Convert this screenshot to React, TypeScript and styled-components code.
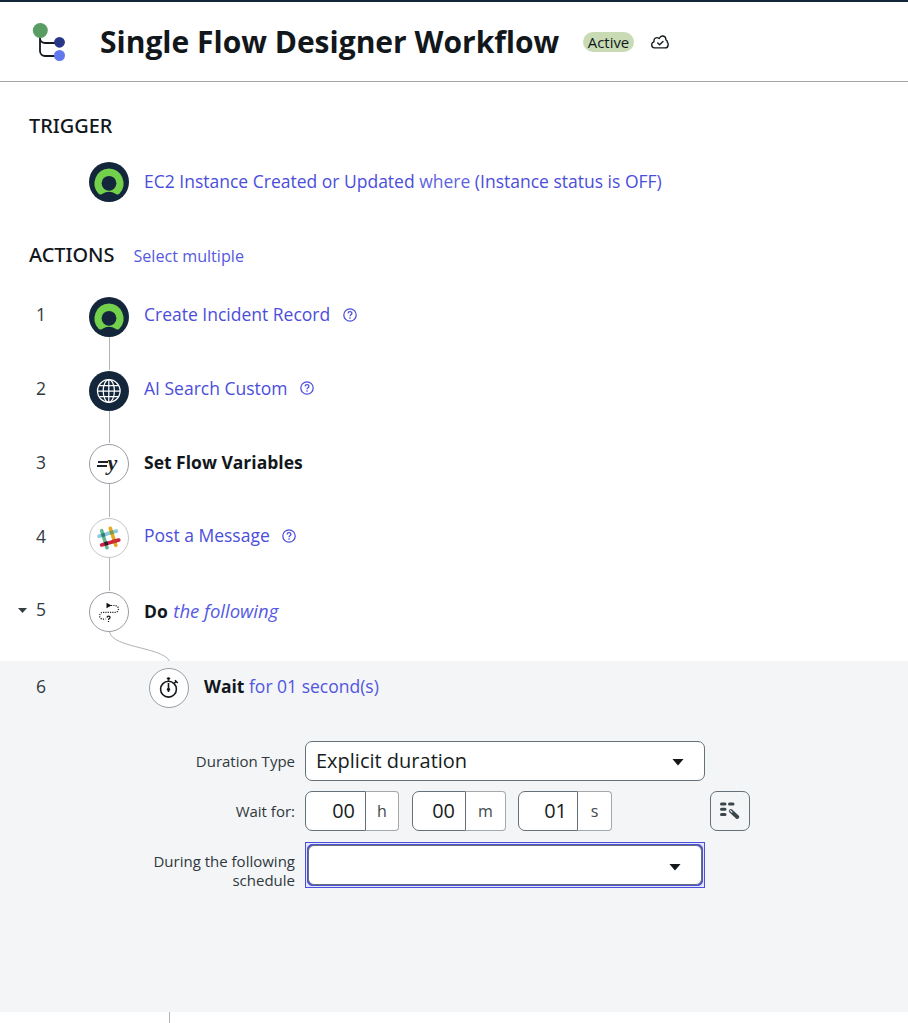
import React from "react";
import styled, { createGlobalStyle, css } from "styled-components";

const Global = createGlobalStyle`
  * { box-sizing: border-box; }
  body { margin: 0; background: #fff; }
`;

const Page = styled.div`
  height: 1023px;
  overflow: hidden;
  display: flex;
  flex-direction: column;
  font-family: "Open Sans", "Noto Sans", sans-serif;
  color: #12171c;
  background: #fff;
`;

const Header = styled.header`
  flex: none;
  height: 82px;
  border-top: 2px solid #14263a;
  border-bottom: 1px solid #a1a5a8;
  display: flex;
  align-items: center;
  padding: 2px 0 0 32px;
  svg { flex: none; display: block; }
`;

const Title = styled.h1`
  margin: 0 24px 2px 33px;
  width: 459px;
  font-size: 30px;
  line-height: 40px;
  font-weight: 700;
  white-space: nowrap;
`;

const Status = styled.span`
  width: 51px;
  height: 20px;
  margin: 0 17px 2px 0;
  border-radius: 10px;
  background: #c8dbb4;
  font-size: 14.9px;
  line-height: 21px;
  text-align: center;
  white-space: nowrap;
`;

const SectionHead = styled.div<{ $h: number; $pad: number }>`
  flex: none;
  height: ${(p) => p.$h}px;
  padding: ${(p) => p.$pad}px 0 0 29px;
  display: flex;
  align-items: baseline;
  gap: 19px;
`;

const SectionTitle = styled.h2`
  margin: 0;
  font-family: "Noto Sans", sans-serif;
  font-size: 19.9px;
  line-height: 26px;
  font-weight: 500;
  white-space: nowrap;
`;

const SelectLink = styled.a`
  font-size: 16.150px;
  line-height: 24px;
  color: #5459e0;
  white-space: nowrap;
`;

const Step = styled.div<{ $h: number; $indent?: boolean }>`
  flex: none;
  height: ${(p) => p.$h}px;
  padding-left: 18px;
  display: grid;
  grid-template-columns: 18px ${(p) => (p.$indent ? 113 : 53)}px 40px 1fr;
  align-items: start;
`;

const Caret = styled.span`
  grid-column: 1;
  margin-top: 16px;
  width: 9px;
  height: 5px;
  background: #343d42;
  clip-path: polygon(0 0, 100% 0, 50% 100%);
`;

const StepNumber = styled.span<{ $drop?: number }>`
  grid-column: 2;
  padding-top: ${(p) => p.$drop ?? 0}px;
  font-size: 17.5px;
  line-height: 34px;
  color: #30393e;
`;

const Track = styled.div`
  grid-column: 3;
  height: 100%;
  display: flex;
  flex-direction: column;
  align-items: center;
`;

const Badge = styled.div<{ $dark?: boolean; $pale?: boolean }>`
  flex: none;
  width: 40px;
  height: 40px;
  border-radius: 50%;
  display: grid;
  place-items: center;
  ${(p) =>
    p.$dark
      ? css`background: #14263c;`
      : css`background: #fff; border: 1px solid ${p.$pale ? "#c3c5c9" : "#989da3"};`}
  svg { display: block; }
`;

const Line = styled.span`
  flex: 1;
  width: 1px;
  margin: 0 0 1px 1px;
  background: #b0b3b6;
`;

const Label = styled.div<{ $h?: number }>`
  grid-column: 4;
  padding-left: 15px;
  display: flex;
  align-items: center;
  height: ${(p) => p.$h ?? 36}px;
  font-size: 17.5px;
  white-space: pre;
  color: #4b4edb;
  b { color: #12171c; font-weight: 700; }
  i { color: #5459e6; font-size: 18.5px; margin-left: 1px; }
`;

const Muted = styled.span`
  color: #5e63e0;
`;

const WaitText = styled.span`
  color: #5256df;
`;

const Help = styled.svg<{ $top?: number }>`
  margin: ${(p) => p.$top ?? 0}px 0 0 12.500px;
  display: block;
`;

const Panel = styled.section`
  flex: none;
  height: 351px;
  background: #f3f5f7;
  padding-top: 7px;
`;

const Form = styled.div`
  display: grid;
  grid-template-columns: 295px 400px 40px;
  grid-template-rows: 40px 40px 46px;
  row-gap: 10px;
`;

const FieldLabel = styled.label`
  padding-top: 11px;
  text-align: right;
  font-size: 15px;
  line-height: 19px;
  color: #30383d;
  white-space: nowrap;
`;

const Cell = styled.div`
  margin-left: 10px;
  width: 400px;
  display: flex;
`;

const Select = styled.div`
  width: 400px;
  height: 40px;
  border: 1px solid #667078;
  border-radius: 7px;
  background: #fff;
  padding: 0 20px 2px 10px;
  display: flex;
  align-items: center;
  justify-content: space-between;
  font-size: 20px;
  color: #171c20;
`;

const FocusFrame = styled.div`
  margin-top: 1px;
  width: 400px;
  height: 46px;
  border: 1px solid #4b50d6;
  background: #e4e6fb;
  padding: 1px;
`;

const FocusSelect = styled.div`
  height: 42px;
  border: 1px solid #4b50d6;
  border-radius: 5px;
  background: #4b50d6;
`;

const FocusInner = styled.div`
  height: 40px;
  border: 1px solid #667078;
  border-radius: 6px;
  background: #fff;
  display: flex;
  align-items: center;
  justify-content: flex-end;
  padding-right: 20px;
`;

const Arrow = styled.span`
  width: 12px;
  height: 7px;
  margin-top: 4px;
  background: #14181b;
  clip-path: polygon(0 0, 100% 0, 50% 100%);
`;

const Unit = styled.div<{ $gap: number }>`
  display: flex;
  width: 94px;
  height: 40px;
  margin-right: ${(p) => p.$gap}px;
`;

const Value = styled.div<{ $w: number }>`
  width: ${(p) => p.$w}px;
  border: 1px solid #667078;
  border-radius: 7px 0 0 7px;
  background: #fff;
  padding-right: 10px;
  text-align: right;
  font-size: 19.9px;
  line-height: 37px;
  color: #171c20;
`;

const Suffix = styled.div`
  flex: 1;
  border: 1px solid #a3a8ac;
  border-left: 0;
  border-radius: 0 4px 4px 0;
  background: #fff;
  text-align: center;
  font-size: 16px;
  line-height: 38px;
  color: #42484c;
`;

const ToolButton = styled.button`
  margin-left: 15px;
  width: 40px;
  height: 40px;
  padding: 0;
  border: 1px solid #667078;
  border-radius: 7px;
  background: #f3f5f7;
  display: grid;
  place-items: center;
`;

const Curve = styled.svg`
  flex: none;
  align-self: flex-start;
  display: block;
  margin-left: 20px;
`;

const Tail = styled.span`
  flex: 1;
  width: 1px;
  margin-left: 169px;
  background: #b0b3b6;
`;

const FlowIcon = () => (
  <svg width="35" height="40" viewBox="0 0 35 40" fill="none">
    <path d="M8 10V28a5 5 0 0 0 5 5H26M8 15a5 5 0 0 0 5 5H26" stroke="#14191d" strokeWidth="1.8" />
    <circle cx="8.300" cy="7.500" r="7.500" fill="#599d64" />
    <circle cx="27.500" cy="19.300" r="5.400" fill="#293788" />
    <circle cx="27.500" cy="32.500" r="5.500" fill="#6179ec" />
  </svg>
);

const CloudShape = styled.svg`
  margin-bottom: 2px;
`;

const CloudIcon = () => (
  <CloudShape width="18" height="14" viewBox="0 0 18 14" fill="none" stroke="#14191d" strokeWidth="1.350" strokeLinejoin="round" strokeLinecap="round">
    <path d="M3.500 12.900C1.900 12.900.7 11.500.7 9.800c0-1.500 1-2.700 2.300-3-.3-2.200.8-4.200 2.700-4.200.9 0 1.700.3 2.500.9C9 1.700 10.500.8 12 1c1.900.3 3 1.800 2.800 3.900 1.300.5 1.700 1.300 1.500 2.500.7.5 1 1.200.9 2.200-.1 2-1.300 3.300-3 3.300z" />
    <path d="m6.700 7.900 1.900 1.900L12 6.500" />
  </CloudShape>
);

const NowIcon = () => (
  <svg width="40" height="40" viewBox="0 0 40 40">
    <path d="M20 6.400a15 15 0 0 0-10.400 25.300c.9 1 2.300 1 3.500.2a13 13 0 0 1 13.800 0c1.200.8 2.600.8 3.500-.2A15 15 0 0 0 20 6.400z" fill="#72d04c" />
    <circle cx="20" cy="21.300" r="7.400" fill="#14263c" />
  </svg>
);

const GlobeIcon = () => (
  <svg width="40" height="40" viewBox="0 0 40 40" fill="none" stroke="#fff" strokeWidth="1.250">
    <circle cx="19.800" cy="20" r="11.300" />
    <ellipse cx="19.800" cy="20" rx="5.600" ry="11.300" />
    <path d="M19.800 8.700v22.600M8.500 20h22.600M10.300 14.500h19M10.300 25.500h19" />
  </svg>
);

const Formula = styled.span`
  display: flex;
  align-items: center;
  margin: 0 4px 1px 0;
  color: #1d2226;
  em {
    font-family: "Liberation Serif", serif;
    font-size: 22px;
    line-height: 20px;
    font-weight: 700;
    margin-top: -1px;
  }
`;

const FormulaIcon = () => (
  <Formula>
    <svg width="11" height="8" viewBox="0 0 11 8" stroke="#1d2226" strokeWidth="2">
      <path d="M1 2h10M0 6h10" />
    </svg>
    <em>y</em>
  </Formula>
);

const SlackIcon = () => (
  <svg width="38" height="38" viewBox="0 0 38 38" fill="none" strokeLinecap="round" strokeWidth="3.600">
    <path d="m9 17.300 17.500-5.200" stroke="#8acbe0" />
    <path d="m11.700 11.700 5.300 17" stroke="#62b891" />
    <path d="m20.300 9.300 5.500 17" stroke="#e5a922" />
    <path d="m11.600 26 17.200-5" stroke="#cf2142" />
    <g strokeLinecap="butt">
      <path d="m11.500 16.500 3.400-1" stroke="#2f7f79" />
      <path d="m20 14 3.400-1" stroke="#7d9a45" />
      <path d="m14.500 25 3.400-1" stroke="#281c2b" />
      <path d="m23 22.600 3.400-1" stroke="#c73a24" />
    </g>
  </svg>
);

const DoIcon = () => (
  <svg width="38" height="38" viewBox="0 0 38 38" fill="none">
    <path d="M21 12.500h4a3.400 3.400 0 0 1 0 6.900H13a3.400 3.400 0 0 0 0 6.800h2.500" stroke="#222" strokeWidth="1.200" strokeDasharray="1.200 1.100" />
    <path d="m16.500 9.800 5 2.700-5 2.700z" fill="#111" />
    <path d="M17 24.600c.2-2.100 3.200-1.900 3 0-.1 1-1.400 1-1.500 2.300m0 1v1.200" stroke="#111" strokeWidth="1.200" />
  </svg>
);

const TimerIcon = () => (
  <svg width="38" height="38" viewBox="0 0 38 38" fill="none" stroke="#15191c" strokeWidth="1.600">
    <circle cx="18.500" cy="20.200" r="7.900" />
    <path d="M18.500 8.300v3.500M16.800 9.500h3.400M18.500 14v9M25 11.300l2.700 2.700M24.300 14.300l1.500-1.500" />
    <circle cx="18.500" cy="20.300" r="1.600" fill="#15191c" stroke="none" />
  </svg>
);

const HelpIcon = ({ top }: { top?: number }) => (
  <Help $top={top} width="14" height="14" viewBox="0 0 14 14" fill="none" stroke="#4b4edb" strokeWidth="1.250">
    <circle cx="7" cy="7" r="6.200" />
    <path d="M5.100 5.400c.1-2.500 3.900-2.300 3.800 0-.1 1.300-1.900 1.300-1.900 2.800M7 9.300v1.400" />
  </Help>
);

const WandIcon = () => (
  <svg width="22" height="20" viewBox="0 0 22 20" fill="none" stroke="#39464c" strokeWidth="3" strokeLinecap="round">
    <path d="M2.500 3h3.500M10.500 3h3.500M2.500 8.300h3.500M2.500 13.600h3.500" />
    <path d="m11.800 10 6.500 6" strokeWidth="3.800" />
    <path d="m11.400 9.600 1.500 1.500" stroke="#f3f5f7" strokeWidth="1.200" />
  </svg>
);

interface FlowStep {
  n: number;
  h: number;
  drop?: number;
  labelHeight?: number;
  icon: React.ReactNode;
  label: React.ReactNode;
  dark?: boolean;
  pale?: boolean;
}

const steps: FlowStep[] = [
  { n: 1, h: 74, labelHeight: 34, dark: true, icon: <NowIcon />, label: <>Create Incident Record<HelpIcon top={2} /></> },
  { n: 2, h: 73, labelHeight: 34, dark: true, icon: <GlobeIcon />, label: <>AI Search Custom<HelpIcon /></> },
  { n: 3, h: 74, drop: 1, icon: <FormulaIcon />, label: <b>Set Flow Variables</b> },
  { n: 4, h: 74, drop: 1, labelHeight: 34, pale: true, icon: <SlackIcon />, label: <>Post a Message<HelpIcon top={2} /></> },
];

const durations = [
  { value: "00", unit: "h", gap: 13, input: 61 },
  { value: "00", unit: "m", gap: 12, input: 54 },
  { value: "01", unit: "s", gap: 0, input: 60 },
];

export default function App() {
  return (
    <Page>
      <Global />
      <Header>
        <FlowIcon />
        <Title>Single Flow Designer Workflow</Title>
        <Status>Active</Status>
        <CloudIcon />
      </Header>

      <SectionHead $h={80} $pad={31}>
        <SectionTitle>TRIGGER</SectionTitle>
      </SectionHead>
      <Step $h={40}>
        <Track><Badge $dark><NowIcon /></Badge></Track>
        <Label $h={38}><span>EC2 Instance Created or Updated <Muted>where</Muted> (Instance status is OFF)</span></Label>
      </Step>

      <SectionHead $h={95} $pad={40}>
        <SectionTitle>ACTIONS</SectionTitle>
        <SelectLink>Select multiple</SelectLink>
      </SectionHead>
      {steps.map((s) => (
        <Step key={s.n} $h={s.h}>
          <StepNumber $drop={s.drop}>{s.n}</StepNumber>
          <Track>
            <Badge $dark={s.dark} $pale={s.pale}>{s.icon}</Badge>
            <Line />
          </Track>
          <Label $h={s.labelHeight}>{s.label}</Label>
        </Step>
      ))}
      <Step $h={69}>
        <Caret />
        <StepNumber>5</StepNumber>
        <Track>
          <Badge><DoIcon /></Badge>
          <Curve width="62" height="29" viewBox="0 0 62 29" fill="none">
            <path d="M.5 0C4 16 53 15 60.500 29" stroke="#b0b3b6" />
          </Curve>
        </Track>
        <Label><span><b>Do</b> <i>the following</i></span></Label>
      </Step>

      <Panel>
        <Step $h={73} $indent>
          <StepNumber $drop={1}>6</StepNumber>
          <Track><Badge><TimerIcon /></Badge></Track>
          <Label><span><b>Wait</b> <WaitText>for 01 second(s)</WaitText></span></Label>
        </Step>
        <Form>
          <FieldLabel>Duration Type</FieldLabel>
          <Cell><Select>Explicit duration<Arrow /></Select></Cell>
          <span />
          <FieldLabel>Wait for:</FieldLabel>
          <Cell>
            {durations.map((d) => (
              <Unit key={d.unit} $gap={d.gap}>
                <Value $w={d.input}>{d.value}</Value>
                <Suffix>{d.unit}</Suffix>
              </Unit>
            ))}
          </Cell>
          <ToolButton><WandIcon /></ToolButton>
          <FieldLabel>During the following<br />schedule</FieldLabel>
          <Cell>
            <FocusFrame><FocusSelect><FocusInner><Arrow /></FocusInner></FocusSelect></FocusFrame>
          </Cell>
        </Form>
      </Panel>
      <Tail />
    </Page>
  );
}
